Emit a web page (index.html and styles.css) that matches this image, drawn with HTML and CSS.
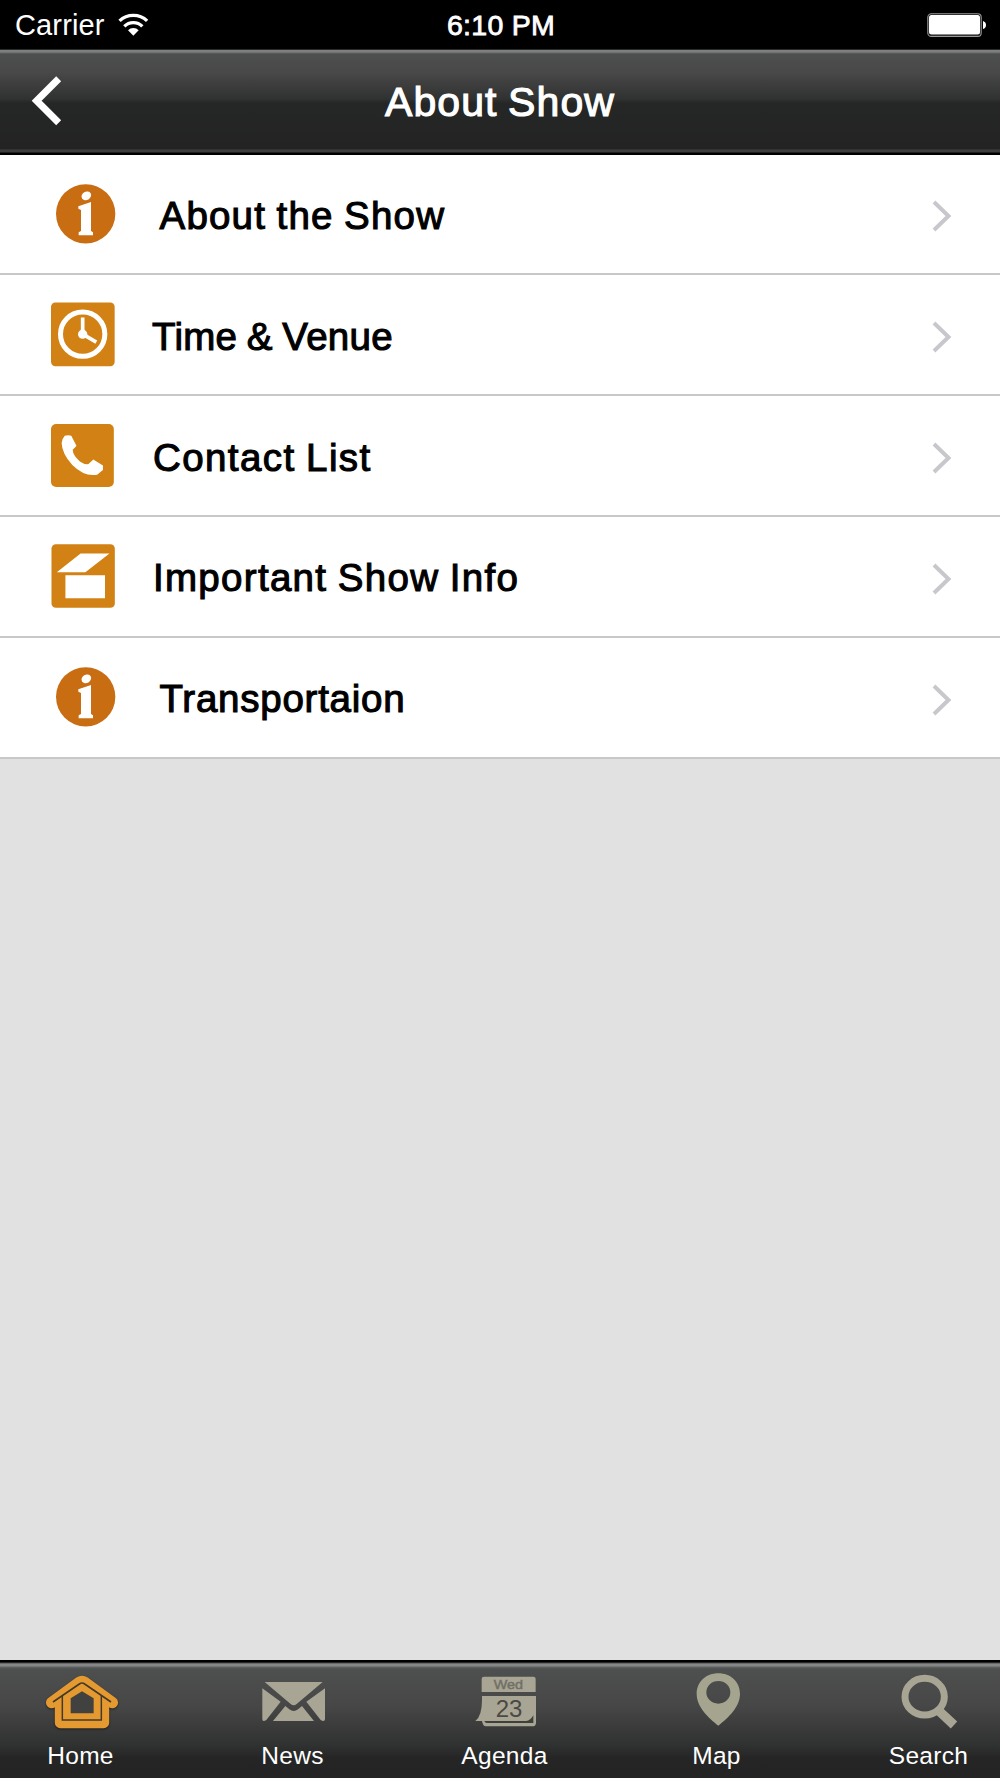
FILE: index.html
```html
<!DOCTYPE html>
<html lang="en">
<head>
<meta charset="utf-8">
<title>About Show</title>
<link rel="stylesheet" href="styles.css">
</head>
<body>
<div class="status">
  <div class="status-left">
    <span class="carrier">Carrier</span>
    <svg class="wifi" viewBox="354 36 93 72" fill="none" stroke="#fff" stroke-width="10">
      <path d="M358.600 59.600A60 60 0 0 1 441.400 59.600"/>
      <path d="M373 76A38 38 0 0 1 427 76"/>
      <path d="M400 104L384 88A22.600 22.600 0 0 1 416 88Z" fill="#fff" stroke="none"/>
    </svg>
  </div>
  <span class="clock">6:10 PM</span>
  <div class="status-right">
    <svg class="battery" viewBox="0 0 60 25">
      <rect x=".8" y=".8" width="53.4" height="22.6" rx="3.5" fill="#111" stroke="#999" stroke-width="1.1"/>
      <rect x="2" y="2" width="51" height="19.6" rx="2.5" fill="#fff"/>
      <path d="M56 8q3 1 3 4t-3 4z" fill="#fff"/>
    </svg>
  </div>
</div>

<header class="nav">
  <svg class="back" viewBox="90 222 102 162"><path d="M176 236L110 302L176 368" fill="none" stroke="#fff" stroke-width="21"/></svg>
  <h1 class="title">About Show</h1>
</header>

<main class="list">
  <a class="row row-info">
    <svg class="row-icon" viewBox="153 93 198 198"><circle cx="257" cy="191.500" r="89" fill="#c86d12"/><g fill="#fff"><ellipse cx="259" cy="137.500" rx="15" ry="12.500" transform="rotate(-30 259 137.500)"/><path d="M235 169L273 156V243L279 247V256H236V247L243 243V180L235 176Z"/></g></svg>
    <span class="label about">About the Show</span>
    <svg class="chevron" viewBox="0 0 20 32"><path d="M2 2L16.500 16L2 30" fill="none" stroke="#c7c7cc" stroke-width="4"/></svg>
  </a>
  <a class="row">
    <svg class="row-icon" viewBox="153 455.400 198 198"><rect x="153" y="457" width="191" height="191" rx="13" fill="#d28214"/><g fill="none" stroke="#fff"><circle cx="248" cy="552" r="66.500" stroke-width="15"/><path d="M248 502V552L289 576" stroke-width="11"/></g><circle cx="248" cy="552" r="14" fill="#fff"/></svg>
    <span class="label time">Time &amp; Venue</span>
    <svg class="chevron" viewBox="0 0 20 32"><path d="M2 2L16.500 16L2 30" fill="none" stroke="#c7c7cc" stroke-width="4"/></svg>
  </a>
  <a class="row">
    <svg class="row-icon" viewBox="148.100 97.800 191.700 198" preserveAspectRatio="none"><rect x="148.100" y="101" width="182.500" height="189" rx="15" fill="#d28214"/><path fill="#fff" d="M188 136Q198 133 207 136L222 166Q219 170 211 178Q212 195 232 213Q246 223 257 221L271 207L299 225V239L282 253Q245 260 210 224Q180 190 179 158Q180 145 188 136Z"/></svg>
    <span class="label contact">Contact List</span>
    <svg class="chevron" viewBox="0 0 20 32"><path d="M2 2L16.500 16L2 30" fill="none" stroke="#c7c7cc" stroke-width="4"/></svg>
  </a>
  <a class="row">
    <svg class="row-icon" viewBox="148.100 458.500 191.700 198" preserveAspectRatio="none"><rect x="149.500" y="462" width="184" height="191" rx="13" fill="#d28214"/><path fill="#fff" d="M165 546L234 490H318L248 546ZM190 555H305V624H190Z"/></svg>
    <span class="label important">Important Show Info</span>
    <svg class="chevron" viewBox="0 0 20 32"><path d="M2 2L16.500 16L2 30" fill="none" stroke="#c7c7cc" stroke-width="4"/></svg>
  </a>
  <a class="row row-info">
    <svg class="row-icon" viewBox="153 93 198 198"><circle cx="257" cy="191.500" r="89" fill="#c86d12"/><g fill="#fff"><ellipse cx="259" cy="137.500" rx="15" ry="12.500" transform="rotate(-30 259 137.500)"/><path d="M235 169L273 156V243L279 247V256H236V247L243 243V180L235 176Z"/></g></svg>
    <span class="label transport">Transportaion</span>
    <svg class="chevron" viewBox="0 0 20 32"><path d="M2 2L16.500 16L2 30" fill="none" stroke="#c7c7cc" stroke-width="4"/></svg>
  </a>
</main>

<nav class="tabs">
  <a class="tab">
    <svg class="tab-icon home" viewBox="99 60 288 186">
      <g fill="#e59a31" stroke="#e59a31" stroke-linejoin="round" stroke-linecap="round">
        <path d="M155 158L238 97Q246 92 254 97L337 158" stroke-width="34"/>
        <path d="M181 145H311V218H181Z" stroke-width="33"/>
      </g>
      <g fill="none" stroke="#443a29" stroke-width="5">
        <path d="M159 156L238 102Q246 96 254 102L333 156"/>
        <path d="M187 138V210H304V138" stroke-width="4.500"/>
      </g>
      <path fill="#41413f" d="M212 190V145L246 124L281 145V190Z"/>
    </svg>
    <span class="tab-label">Home</span>
  </a>
  <a class="tab">
    <svg class="tab-icon" viewBox="735 60 288 186" fill="#a8a594">
      <path d="M794 96H968L890 162Q881 170 872 162Z"/>
      <path d="M787 115L842 155L799 210Q795 213 790 213Q787 212 787 207Z"/>
      <path d="M975 115L919 155L962 210Q966 213 971 213Q975 212 975 207Z"/>
      <path d="M856 168L868 178Q881 188 894 178L906 168L942 213H819Z"/>
    </svg>
    <span class="tab-label">News</span>
  </a>
  <a class="tab">
    <svg class="tab-icon" viewBox="322 60 288 186" fill="#a8a594">
      <path d="M396 126V87Q396 80 403 80H551Q558 80 558 87V126Z"/>
      <path d="M397 138H559V218Q559 229 548 229H408Q400 229 397 213H377Q397 198 397 150Z"/>
      <path d="M404 213H530Q542 212 551 196V219H412Q406 219 404 213Z" fill="#3f403c"/>
      <text x="476" y="118" font-size="41" text-anchor="middle" fill="#727066" stroke="#727066" stroke-width="1.500" textLength="88" lengthAdjust="spacingAndGlyphs">Wed</text>
      <text x="478" y="200" font-size="72" text-anchor="middle" fill="#4a4944">23</text>
    </svg>
    <span class="tab-label agenda">Agenda</span>
  </a>
  <a class="tab">
    <svg class="tab-icon" viewBox="57 60 288 186"><path fill="#a4a48f" fill-rule="evenodd" d="M205 227C175 204 140 170 140 132C140 95 168 70 205 70S270 95 270 132C270 170 235 204 205 227ZM169 127A36 34 0 1 0 241 127A36 34 0 1 0 169 127Z"/></svg>
    <span class="tab-label">Map</span>
  </a>
  <a class="tab">
    <svg class="tab-icon" viewBox="693 60 288 186" fill="none" stroke="#a8a594"><ellipse cx="824" cy="140" rx="59" ry="55" stroke-width="21"/><path d="M866 182L912 225" stroke-width="28"/></svg>
    <span class="tab-label">Search</span>
  </a>
</nav>
</body>
</html>
```
FILE: styles.css
```css
* { box-sizing: border-box; }

body {
  margin: 0;
  width: 1000px;
  height: 1778px;
  overflow: hidden;
  display: flex;
  flex-direction: column;
  background: #e1e1e1;
  font-family: "Liberation Sans", Arial, sans-serif;
}

svg { display: block; flex: none; }

.status {
  height: 49px;
  flex: none;
  display: grid;
  grid-template-columns: 1fr auto 1fr;
  align-items: center;
  padding: 0 13px 0 15px;
  background: #000;
  color: #fff;
  font-size: 29px;
  line-height: 51px;
}

.status-left { display: flex; align-items: center; gap: 13px; }
.carrier { letter-spacing: .15px; }
.wifi { width: 31px; height: 24px; margin-top: -2px; }
.clock { -webkit-text-stroke: .8px #fff; font-size: 28.5px; letter-spacing: .3px; }
.status-right { display: flex; justify-content: flex-end; }
.battery { width: 60px; height: 25px; }

.nav {
  height: 105.6px;
  flex: none;
  display: grid;
  grid-template-columns: 1fr auto 1fr;
  align-items: center;
  padding: 0 30px;
  background: linear-gradient(#2b2b2b 0, #2b2b2b 1px, #7d807f 1px, #7d807f 3px, #626463 4px, #4e504f 5px, #474847 24px, #414141 31px, #303231 50px, #252726 54px, #232323 100px, #3f3f3f 101px, #3f3f3f 103px, #000 104px);
}

.back { width: 34px; height: 54px; margin-top: -1px; }

.title {
  margin: 0;
  color: #fff;
  font-size: 41px;
  font-weight: 400;
  line-height: 48px;
  letter-spacing: 1.1px;
  word-spacing: -2px;
  -webkit-text-stroke: 1.1px #fff;
}

.list { flex: 1; }

.row {
  height: 120.8px;
  display: flex;
  align-items: center;
  padding: 0 48px 0 51px;
  background: #fff;
  border-bottom: 2px solid #c8c8c8;
}

.row-icon { width: 66px; height: 66px; }

.label {
  flex: 1;
  margin: 4px 0 0 36px;
  color: #000;
  font-size: 38.5px;
  line-height: 46px;
  letter-spacing: 1.2px;
  word-spacing: -1.5px;
  -webkit-text-stroke: 1.1px #000;
}

.row-info .label { margin-left: 42.5px; }
.time { letter-spacing: .3px; margin-left: 35px; }
.contact { letter-spacing: 1.4px; }
.important { letter-spacing: 1.3px; }
.transport { letter-spacing: .75px; }

.chevron { width: 20px; height: 32px; margin-top: 5px; }

.tabs {
  height: 118px;
  flex: none;
  display: flex;
  gap: 72px;
  padding: 10px 0 0 10.5px;
  background: linear-gradient(#000 0, #000 2px, #4b4b4b 3px, #858786 4px, #858786 6px, #606261 7px, #4e504f 9px, #464746 45px, #303231 85px, #252525 98px, #242424 100%);
}

.tab {
  width: 140px;
  display: flex;
  flex-direction: column;
  align-items: center;
}

.tab-icon { width: 96px; height: 62px; }
.home { filter: drop-shadow(0 1px 1px rgba(0, 0, 0, .5)); }

.tab-label {
  margin-top: 10px;
  color: #fff;
  font-size: 24.5px;
  line-height: 28px;
  letter-spacing: .3px;
}
```
